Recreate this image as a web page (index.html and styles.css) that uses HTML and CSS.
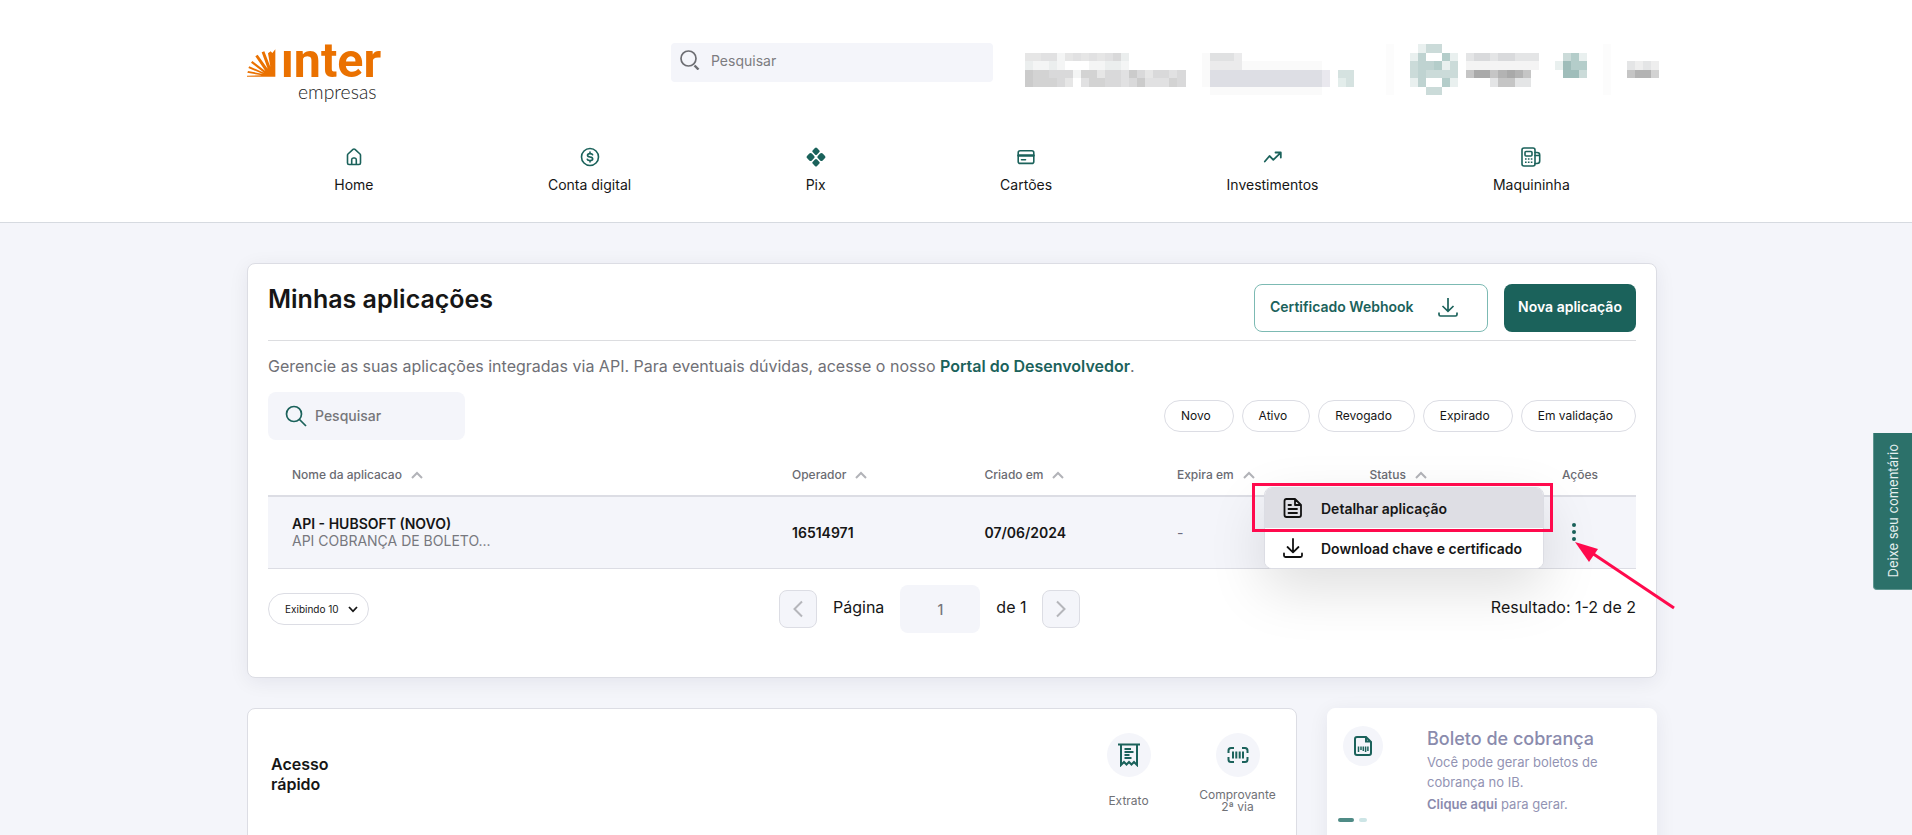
FILE: index.html
```html
<!DOCTYPE html>
<html lang="pt-BR">
<head>
<meta charset="utf-8">
<title>Inter Empresas - Minhas aplicações</title>
<link rel="stylesheet" href="styles.css">
</head>
<body>
<header class="header">
  <div class="container">
    <div class="topbar">
      <a class="logo" href="#" aria-label="Inter Empresas">
        <svg width="137" height="75" viewBox="0 -39 411 225">
          <path fill="#ea7100" d="M63 34L71 28L76 33L85 22V104H0V101L44 100L1 92L3 87L48 96L4 78L7 73L51 92L12 62L16 57L55 87L25 43L32 38L62 80L44 31L52 28L70 74Z"/>
          <text class="logo-name" x="101" y="104">ınter</text>
          <text class="logo-sub" x="153" y="171">empresas</text>
        </svg>
      </a>
      <label class="top-search">
        <svg width="20" height="20" viewBox="0 0 20 20" fill="none" stroke="#6c6d72"><circle cx="8.500" cy="8.500" r="7.500" stroke-width="1.700"/><path d="M14.500 15.500l4 4" stroke-width="2.400"/></svg>
        <input type="text" placeholder="Pesquisar" aria-label="Pesquisar">
      </label>
      <svg class="mosaic" width="634" height="51" viewBox="0 0 79 6" preserveAspectRatio="none" shape-rendering="crispEdges" aria-hidden="true">
        <g fill="#e6e6e6"><path d="M0 1h2v1h-2zM5 1h1v1h-1zM7 1h1v1h-1zM9 1h1v1h-1zM9 3h1v1h-1zM5 4h1v1h-1zM15 3h1v1h-1z"/></g>
        <g fill="#e1e1e2"><path d="M2 1h2v1h-2zM6 1h1v1h-1zM8 1h1v1h-1zM10 1h1v1h-1zM12 3h1v2h-1zM18 3h1v1h-1zM7 4h1v1h-1zM15 4h3v1h-3z"/></g>
        <g fill="#f4f5f5"><path d="M4 1h1v1h-1zM1 2h2v1h-2zM4 2h1v1h-1zM8 2h2v1h-2zM12 2h1v1h-1zM6 3h1v1h-1z"/></g>
        <g fill="#ebeeee"><path d="M12 1h1v1h-1zM0 2h1v1h-1zM3 2h1v1h-1zM10 2h2v1h-2z"/></g>
        <g fill="#d9d9da"><path d="M11 1h1v1h-1zM3 3h3v1h-3zM10 3h2v2h-2zM14 3h1v1h-1zM16 3h2v1h-2zM19 3h1v2h-1zM4 4h1v1h-1zM13 4h1v1h-1z"/></g>
        <g fill="#d3d3d3"><path d="M1 3h2v2h-2zM7 3h2v1h-2zM8 4h2v1h-2zM3 4h1v1h-1zM18 4h1v1h-1z"/></g>
        <g fill="#cbcbcb"><path d="M0 3h1v2h-1zM13 3h1v1h-1zM14 4h1v1h-1z"/></g>
        <path fill="#fafafa" d="M22 1h1v4h-1zM23 5h14v1h-14zM27 2h10v1h-10z"/>
        <path fill="#e0e1e2" d="M23 1h3v1h-3z"/><path fill="#ebebec" d="M26 1h1v1h-1zM23 2h4v1h-4z"/>
        <path fill="#dddee4" d="M23 3h14v2h-14z"/><path fill="#e9e8ee" d="M37 3h1v2h-1z"/>
        <path fill="#d5e2e0" d="M39 3h2v2h-2z"/><path fill="#e3edeb" d="M39 4h1v1h-1z"/>
        <path fill="#fcfcfc" d="M45 0h1v6h-1zM72 0h1v6h-1z"/>
        <path fill="#cbdbd9" d="M50 0h2v1h-2zM50 5h2v1h-2zM48 2h1v2h-1zM50 3h4v1h-4zM53 2h1v1h-1zM67 1h1v1h-1zM69 3h1v1h-1z"/>
        <path fill="#bfd3d1" d="M49 1h1v1h-1zM49 2h2v1h-2zM49 3h1v2h-1z"/>
        <path fill="#b4cdca" d="M52 1h1v1h-1zM51 2h1v1h-1zM52 4h1v1h-1zM68 1h1v3h-1zM69 2h1v1h-1z"/>
        <path fill="#e9f0ef" d="M48 1h1v1h-1zM53 1h1v1h-1zM52 2h1v1h-1zM48 4h1v1h-1zM53 4h1v1h-1zM66 2h1v1h-1zM69 1h1v1h-1zM49 0h1v1h-1z"/>
        <path fill="#9fbdba" d="M67 2h1v2h-1zM68 3h1v1h-1z"/>
        <path fill="#e4e5e6" d="M55 1h1v1h-1zM58 1h1v1h-1zM61 1h3v1h-3zM58 4h1v1h-1zM61 4h2v1h-2zM75 2h1v1h-1zM77 2h1v1h-1z"/>
        <path fill="#d9dadc" d="M56 1h2v1h-2zM59 1h2v1h-2z"/>
        <path fill="#f4f4f4" d="M55 2h9v1h-9z"/><path fill="#eeeeee" d="M76 2h1v1h-1zM78 2h1v1h-1z"/>
        <path fill="#c5c5c5" d="M55 3h1v1h-1zM58 3h1v1h-1zM62 3h1v1h-1zM59 4h2v1h-2zM75 3h1v1h-1z"/>
        <path fill="#b3b3b3" d="M59 3h1v1h-1zM61 3h1v1h-1zM76 3h2v1h-2z"/>
        <path fill="#a9a9a9" d="M56 3h2v1h-2zM60 3h1v1h-1z"/><path fill="#d2d2d2" d="M78 3h1v1h-1z"/>
      </svg>
    </div>
    <nav class="nav">
      <a href="#"><svg viewBox="0 0 20 20" class="icon"><path d="M3.500 8.300Q3.500 7.500 4 7L9 2.400Q10 1.600 11 2.400L16 7Q16.500 7.500 16.500 8.300V16Q16.500 17.500 15 17.500H5Q3.500 17.500 3.500 16ZM7.700 17.500V12.700Q7.700 11 9.300 11H10.700Q12.300 11 12.300 12.700V17.500"/></svg>Home</a>
      <a href="#"><svg viewBox="0 0 20 20" class="icon"><circle cx="10" cy="10" r="8.500"/><path d="M12.600 7.800Q12.300 6.600 10 6.600Q7.500 6.600 7.500 8.300Q7.500 9.700 10 10Q12.700 10.300 12.700 11.900Q12.700 13.500 10 13.500Q7.600 13.500 7.300 12.200M10 5V6.600M10 13.500V15"/></svg>Conta digital</a>
      <a href="#"><svg viewBox="0 0 20 20" class="icon solid"><rect x="7" y="1.200" width="6" height="6" rx="1.500" transform="rotate(45 10 4.200)"/><rect x="7" y="12.800" width="6" height="6" rx="1.500" transform="rotate(45 10 15.800)"/><rect x="1.300" y="6.700" width="6.600" height="6.600" rx="1.800" transform="rotate(45 4.600 10)"/><rect x="12.100" y="6.700" width="6.600" height="6.600" rx="1.800" transform="rotate(45 15.400 10)"/></svg>Pix</a>
      <a href="#"><svg viewBox="0 0 20 20" class="icon"><rect x="2.200" y="3.800" width="15.600" height="12.600" rx="2"/><path d="M2.500 8.500H17.500" stroke-width="2.400"/><path d="M5.500 12.800H9.500"/></svg>Cartões</a>
      <a href="#"><svg viewBox="0 0 20 20" class="icon"><path d="M1.800 14.500L6.500 9L10.300 12.800L17.500 5.800M12.500 5.500H17.800V10.500" stroke-width="1.800"/></svg>Investimentos</a>
      <a href="#"><svg viewBox="0 0 20 20" class="icon"><rect x="1" y="1" width="13" height="18" rx="2"/><rect x="4" y="4.500" width="7" height="4.500" rx="1"/><path d="M14 5.500H16Q18.700 5.500 18.700 8V14Q18.700 16.500 16 16.500H14M14 8.500H18"/><path d="M4 12h1.600M6.900 12h1.600M9.800 12h1.600M4 15.300h1.600M6.900 15.300h1.600M9.800 15.300h1.600" stroke-linecap="butt"/></svg>Maquininha</a>
    </nav>
  </div>
</header>
<main class="container main">
  <section class="card apps">
    <div class="apps-head">
      <h1>Minhas aplicações</h1>
      <div class="actions">
        <button class="btn outline" type="button">Certificado Webhook
          <svg width="20" height="20" viewBox="0 0 20 20" class="stroke"><path d="M10 1V14M4.500 9L10 14.300L15.500 9M1 15.500V17.500Q1 19 2.500 19H17.500Q19 19 19 17.500V15.500"/></svg>
        </button>
        <button class="btn primary" type="button">Nova aplicação</button>
      </div>
    </div>
    <p class="intro">Gerencie as suas aplicações integradas via API. Para eventuais dúvidas, acesse o nosso <a href="#">Portal do Desenvolvedor</a>.</p>
    <div class="filters">
      <label class="search">
        <svg width="22" height="22" viewBox="0 0 22 22" class="stroke search-icon"><circle cx="9" cy="9" r="7.500"/><path d="M14.500 14.500L21 21"/></svg>
        <input type="text" placeholder="Pesquisar" aria-label="Pesquisar aplicações">
      </label>
      <div class="chips">
        <button type="button">Novo</button><button type="button">Ativo</button><button type="button">Revogado</button><button type="button">Expirado</button><button type="button">Em validação</button>
      </div>
    </div>
    <table class="table">
      <colgroup><col class="c-name"><col class="c-mid"><col class="c-mid"><col class="c-mid"><col class="c-mid"><col></colgroup>
      <thead>
        <tr>
          <th>Nome da aplicacao<svg class="sort" viewBox="0 0 12 8"><path d="M1 7L6 2L11 7"/></svg></th>
          <th>Operador<svg class="sort" viewBox="0 0 12 8"><path d="M1 7L6 2L11 7"/></svg></th>
          <th>Criado em<svg class="sort" viewBox="0 0 12 8"><path d="M1 7L6 2L11 7"/></svg></th>
          <th>Expira em<svg class="sort" viewBox="0 0 12 8"><path d="M1 7L6 2L11 7"/></svg></th>
          <th>Status<svg class="sort" viewBox="0 0 12 8"><path d="M1 7L6 2L11 7"/></svg></th>
          <th>Ações</th>
        </tr>
      </thead>
      <tbody>
        <tr>
          <td><strong>API - HUBSOFT (NOVO)</strong><span class="sub">API COBRANÇA DE BOLETO...</span></td>
          <td><strong>16514971</strong></td>
          <td><strong>07/06/2024</strong></td>
          <td class="empty">-</td>
          <td></td>
          <td class="row-actions">
            <button class="dots" type="button" aria-label="Ações"><svg width="6" height="20" viewBox="0 0 6 20"><circle cx="3" cy="3" r="2"/><circle cx="3" cy="10" r="2"/><circle cx="3" cy="17" r="2"/></svg></button>
            <div class="menu">
              <button type="button" class="active"><svg width="20" height="20" viewBox="0 0 20 20"><path d="M3.500 1H12L18 7V17Q18 19 16 19H3.500Q1.500 19 1.500 17V3Q1.500 1 3.500 1ZM12 1V7H18M5.500 7H8M5.500 11H14M5.500 15H14"/></svg>Detalhar aplicação</button>
              <button type="button"><svg width="20" height="20" viewBox="0 0 20 20"><path d="M10 1V14M4.500 9L10 14.300L15.500 9M1 15.500V17.500Q1 19 2.500 19H17.500Q19 19 19 17.500V15.500"/></svg>Download chave e certificado</button>
            </div>
            <div class="highlight"></div>
            <svg class="arrow" width="102" height="70" viewBox="0 0 102 70"><path d="M12 8L100 67" stroke="#ff0a4d" stroke-width="3"/><path d="M1 1L24 8L15 21Z" fill="#ff0a4d"/></svg>
          </td>
        </tr>
      </tbody>
    </table>
    <div class="pagination">
      <button class="page-size" type="button">Exibindo 10<svg width="10" height="7" viewBox="0 0 10 7"><path d="M1 1L5 5.300L9 1"/></svg></button>
      <div class="pager">
        <button type="button" aria-label="Anterior"><svg width="10" height="18" viewBox="0 0 10 18"><path d="M9 1.500L1.500 9L9 16.500"/></svg></button>
        <label for="page">Página</label>
        <input id="page" type="text" value="1">
        <span>de 1</span>
        <button type="button" aria-label="Próxima"><svg width="10" height="18" viewBox="0 0 10 18"><path d="M1 1.500L8.500 9L1 16.500"/></svg></button>
      </div>
      <span>Resultado: 1-2 de 2</span>
    </div>
  </section>
  <div class="lower">
    <section class="card quick">
      <h2>Acesso<br>rápido</h2>
      <div class="shortcuts">
        <a href="#"><span class="disc"><svg width="22" height="24" viewBox="0 0 22 24" class="stroke"><path d="M0 1.500H22M3 2V22L6 19L8.500 21.500L11 19L13.500 21.500L16 19L19 22V2" stroke-width="2"/><path d="M6.500 6H13M6.500 9H15.500M6.500 12H11.500M6.500 15H13.500" stroke-width="1.800"/></svg></span><span class="cap">Extrato</span></a>
        <a href="#"><span class="disc"><svg width="22" height="22" viewBox="0 0 22 22" class="stroke"><path d="M7 4H4Q1.500 4 1.500 6.500V9M15 4H18Q20.500 4 20.500 6.500V9M7 18H4Q1.500 18 1.500 15.500V13M15 18H18Q20.500 18 20.500 15.500V13M6 7.500V14.500M9.300 7.500V14.500M12.700 7.500V14.500M16 7.500V14.500" stroke-width="2"/></svg></span><span class="cap">Comprovante<br>2ª via</span></a>
      </div>
    </section>
    <section class="card promo">
      <span class="disc small"><svg width="20" height="20" viewBox="0 0 20 20" class="stroke"><path d="M4 1H13L18 6V17Q18 19 16 19H4Q2 19 2 17V3Q2 1 4 1ZM13 1V5.500H18" stroke-width="2"/><path d="M5.500 10.500V16M8 10.500V14M10.300 10.500V15M12.600 10.500V16M14.900 10.500V15" stroke-width="1.500"/></svg></span>
      <div class="promo-text">
        <h2>Boleto de cobrança</h2>
        <p>Você pode gerar boletos de cobrança no IB.</p>
        <p><a href="#">Clique aqui</a> para gerar.</p>
      </div>
      <div class="slides"><i class="on"></i><i></i></div>
    </section>
  </div>
</main>
<button class="feedback" type="button">Deixe seu comentário</button>
</body>
</html>
```
FILE: styles.css
```css
* { box-sizing: border-box; }
html { overflow: hidden; }
body { margin: 0; background: #f4f5fa; color: #161616; font: 400 14px/20px Inter, "Liberation Sans", sans-serif; }
button, input { font: inherit; color: inherit; }
button { cursor: pointer; }
a { color: inherit; text-decoration: none; }
h1, h2, p { margin: 0; }
svg { flex: none; }
input { min-width: 0; border: 0; background: none; outline: 0; }
.header { padding: 29px 8px 27px 0; background: #fff; border-bottom: 1px solid #d6dae0; }
.container { width: 100%; max-width: 1410px; margin: 0 auto; }
.topbar { display: flex; align-items: flex-start; height: 75px; }
.logo { margin-right: 287px; }
.logo svg { display: block; }
.logo-name { font: 700 145px Roboto, sans-serif; fill: #ea7100; }
.logo-sub { font: 300 58px Lato, sans-serif; fill: #222; }
.top-search { display: flex; flex: 1; align-items: flex-start; gap: 11px; height: 39px; margin: 14px 32px 0 0; padding: 7px 9px; border-radius: 4px; background: #f4f5fa; }
.top-search input { padding: 1px 0 0; width: 100%; }
.top-search input::placeholder { color: #7c7c80; opacity: 1; }
.mosaic { margin: 15px -2px 0 0; }
.nav { display: flex; justify-content: space-around; margin-top: 43px; }
.nav a { display: flex; flex-direction: column; align-items: center; gap: 8px; }
.icon { width: 20px; height: 20px; fill: none; stroke: #1b625b; stroke-width: 1.6; stroke-linecap: round; stroke-linejoin: round; }
.icon.solid { fill: #1b625b; stroke: none; }
.stroke { fill: none; stroke: #1b625b; stroke-width: 1.7; }
body > .main { width: calc(100% - 8px); margin-left: max(0px, calc((100% - 1418px) / 2)); padding-top: 40px; }
.card { background: #fff; border: 1px solid #dcdde4; border-radius: 8px; }
.apps { padding: 20px 20px 44px; box-shadow: 0 4px 20px rgba(20, 20, 50, .07); }
.apps-head { display: flex; justify-content: space-between; align-items: flex-start; padding-bottom: 8px; border-bottom: 1px solid #dcdde0; }
h1 { font-size: 25px; line-height: 30px; font-weight: 600; }
.actions { display: flex; gap: 16px; }
.btn { display: flex; align-items: center; justify-content: center; height: 48px; padding: 0 15px 2px; border-radius: 8px; font-weight: 600; white-space: nowrap; }
.outline { width: 234px; justify-content: flex-start; gap: 24px; background: #fff; border: 1px solid #7cbab3; color: #1b625b; }
.primary { width: 132px; background: #1b625b; border: 0; color: #fff; }
.intro { margin-top: 13px; font-size: 16px; line-height: 24px; color: #6f7076; }
.intro a { font-weight: 600; color: #1b625b; }
.filters { display: flex; justify-content: space-between; align-items: center; margin-top: 14px; }
.search { display: flex; align-items: center; gap: 8px; width: 197px; height: 48px; padding: 0 17px; border-radius: 8px; background: #f4f5fa; }
.search input { width: 100%; padding: 0; font-weight: 500; }
.search input::placeholder { color: #76767a; opacity: 1; }
.chips { display: flex; gap: 8px; }
.chips button { height: 32px; padding: 0 22px 0 16px; border: 1px solid #dcdde4; border-radius: 16px; background: #fff; font-size: 12px; }
.table { width: 100%; table-layout: fixed; border-spacing: 0; }
.c-name { width: 36.55%; }
.c-mid { width: 14.07%; }
th { padding: 27px 0 12px 24px; border-bottom: 2px solid #dcdde4; text-align: left; font-size: 12px; line-height: 16px; font-weight: 500; color: #6a6b72; white-space: nowrap; }
.sort { width: 12px; height: 8px; margin-left: 9px; fill: none; stroke: #b2b3b8; stroke-width: 2; }
td { height: 72px; padding: 0 0 1px 24px; background: #f4f5fa; border-bottom: 1px solid #dcdde4; line-height: 17px; white-space: nowrap; }
td strong { display: block; font-weight: 600; }
.sub { display: block; color: #77787e; }
.empty { color: #6c6d80; }
.row-actions { position: relative; }
.dots { display: flex; margin-left: 9px; padding: 0; border: 0; background: none; fill: #1b625b; }
.menu { position: absolute; top: -10px; right: 92px; width: 280px; border: 1px solid #dcdde4; border-radius: 8px; overflow: hidden; background: #fff; }
.menu { box-shadow: 0 20px 56px rgba(0, 0, 0, .13); }
.menu button { display: flex; align-items: center; gap: 18px; width: 100%; height: 40px; padding: 0 18px; border: 0; background: #fff; font-weight: 600; }
.menu .active { background: #dedee4; }
.menu svg { fill: none; stroke: #111; stroke-width: 1.8; stroke-linejoin: round; stroke-linecap: round; }
.highlight { position: absolute; top: -14px; right: 83px; width: 301px; height: 49px; border: 3px solid #ff0a4d; }
.arrow { position: absolute; top: 44px; left: 36px; pointer-events: none; }
.pagination { display: flex; justify-content: space-between; align-items: center; margin-top: 16px; font-size: 16px; line-height: 24px; }
.pagination span, .pagination label { padding-bottom: 4px; }
.page-size { display: flex; align-items: center; gap: 9px; height: 32px; padding: 0 10px 0 16px; border: 1px solid #dcdde4; border-radius: 16px; background: #fff; font-size: 10px; }
.page-size svg { fill: none; stroke: #161616; stroke-width: 1.8; }
.pager { display: flex; align-items: center; gap: 16px; }
.pager button { display: flex; align-items: center; justify-content: center; width: 38px; height: 38px; border: 1px solid #dcdde4; border-radius: 8px; background: #f4f5fa; }
.pager svg { fill: none; stroke: #b5b6bb; stroke-width: 2; }
.pager input { width: 80px; height: 48px; padding: 0; border-radius: 8px; background: #f4f5fa; text-align: center; font-size: 14px; font-weight: 500; color: #76767a; }
.lower { display: grid; grid-template-columns: minmax(0, 1fr) 330px; gap: 30px; margin-top: 30px; }
.quick { display: flex; justify-content: space-between; padding: 24px 0 28px 23px; height: 160px; }
.quick h2 { margin-top: 21px; font-size: 16px; line-height: 20px; font-weight: 600; }
.shortcuts { display: flex; margin-right: 4px; }
.shortcuts a { display: flex; flex-direction: column; align-items: center; width: 109px; gap: 12px; color: #707176; font-size: 12px; line-height: 12px; text-align: center; }
.cap { display: flex; align-items: center; min-height: 24px; }
.disc { display: flex; flex: none; align-items: center; justify-content: center; width: 44px; height: 44px; border-radius: 50%; background: #f4f5fa; }
.disc.small { width: 40px; height: 40px; }
.promo { position: relative; display: flex; gap: 44px; padding: 17px 15px; border-color: #fff; color: #9293b3; box-shadow: 0 4px 20px rgba(20, 20, 50, .07); }
.promo h2 { font-size: 18px; line-height: 26px; font-weight: 500; color: #8a8bad; }
.promo p { width: 190px; font-size: 13px; line-height: 20px; }
.promo p + p { margin-top: 2px; }
.promo a { font-weight: 600; color: #8a8bad; }
.slides { position: absolute; left: 10px; top: 109px; display: flex; gap: 5px; }
.slides i { width: 8px; height: 4px; border-radius: 2px; background: #cde5e6; }
.slides .on { width: 16px; background: #4f8b86; }
.feedback { position: fixed; right: 0; top: 433px; width: 39px; height: 157px; padding: 0; border: 1px solid #5f9690; border-width: 0 0 1px 1px; border-radius: 0 0 0 4px; background: #2c716a; color: #e6f0ef; font-size: 13px; writing-mode: sideways-lr; }
```
